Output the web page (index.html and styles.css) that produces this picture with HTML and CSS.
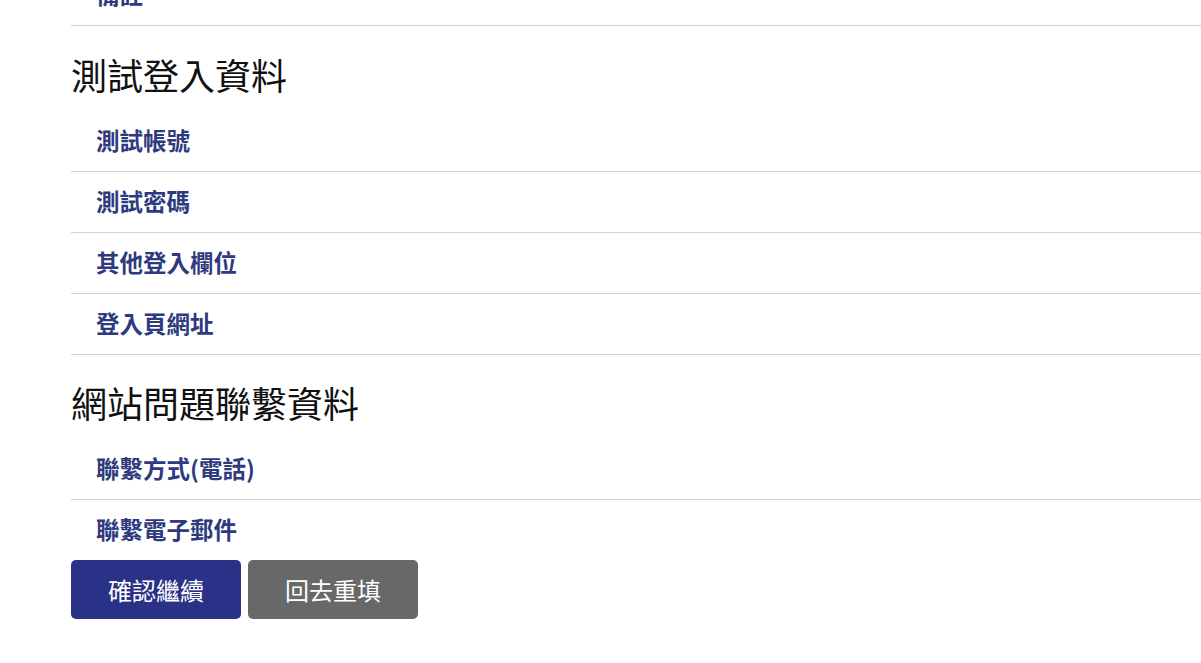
FILE: index.html
```html
<!DOCTYPE html>
<html lang="zh-Hant">
<head>
<meta charset="utf-8">
<title>確認資料</title>
<link rel="stylesheet" href="styles.css">
</head>
<body>
<main class="page">
  <div class="row row-first"><span class="label">備註</span></div>

  <h2 class="section-title">測試登入資料</h2>
  <div class="row"><span class="label">測試帳號</span></div>
  <div class="row"><span class="label">測試密碼</span></div>
  <div class="row"><span class="label">其他登入欄位</span></div>
  <div class="row"><span class="label">登入頁網址</span></div>

  <h2 class="section-title">網站問題聯繫資料</h2>
  <div class="row"><span class="label">聯繫方式(電話)</span></div>
  <div class="row row-last"><span class="label">聯繫電子郵件</span></div>

  <div class="actions">
    <button class="btn btn-primary" type="button">確認繼續</button>
    <button class="btn btn-secondary" type="button">回去重填</button>
  </div>
</main>
</body>
</html>
```

FILE: styles.css
```css
html, body {
  margin: 0;
  padding: 0;
  background: #ffffff;
  overflow: hidden;
}

body {
  font-family: "Noto Sans CJK TC", "Noto Sans", sans-serif;
}

.page {
  padding-left: 71px;
  margin-top: -35px;
}

.row {
  height: 60px;
  display: flex;
  align-items: center;
  padding-left: 25px;
  border-bottom: 1px solid #d2d2d2;
}

.row-last {
  border-bottom: none;
}

.label {
  font-size: 23.5px;
  font-weight: 700;
  color: #2e3a7e;
  line-height: 1;
}

.section-title {
  margin: 0;
  height: 84.5px;
  padding-top: 11px;
  box-sizing: border-box;
  display: flex;
  align-items: center;
  font-size: 36px;
  font-weight: 400;
  color: #111111;
  line-height: 1;
}

.actions {
  display: flex;
  gap: 7px;
}

.btn {
  width: 170px;
  height: 59px;
  border: none;
  border-radius: 5px;
  color: #ffffff;
  font-family: "Noto Sans CJK TC", "Noto Sans", sans-serif;
  font-size: 24px;
  font-weight: 400;
  cursor: pointer;
}

.btn-primary {
  background: #2a3288;
}

.btn-secondary {
  background: #686868;
}
```
